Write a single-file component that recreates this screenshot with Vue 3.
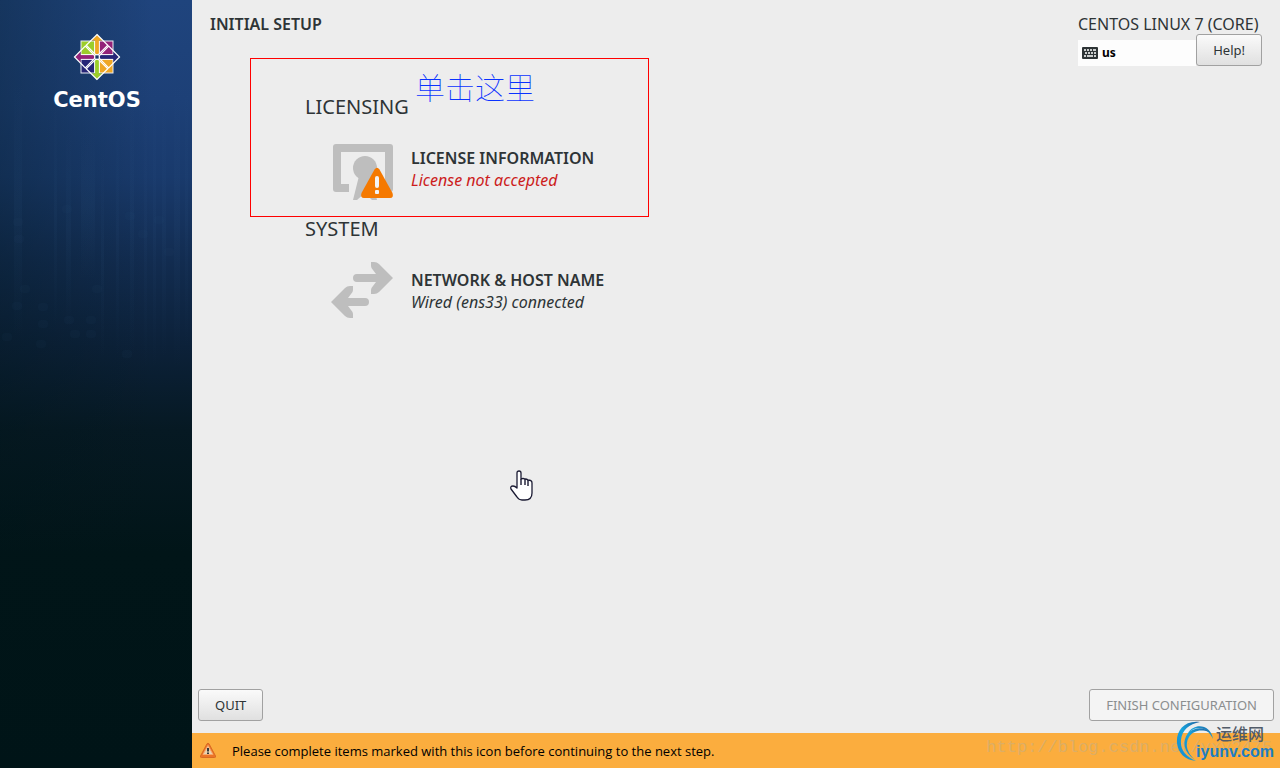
<script setup>
const bands = [
  { x: 14, w: 8, y: 80, h: 260 }, { x: 54, w: 3, y: 100, h: 230 },
  { x: 66, w: 5, y: 130, h: 200 }, { x: 81, w: 14, y: 130, h: 150 },
  { x: 101, w: 3, y: 150, h: 210 }, { x: 116, w: 3, y: 110, h: 250 },
  { x: 130, w: 4, y: 90, h: 270 }, { x: 144, w: 3, y: 100, h: 270 },
  { x: 153, w: 3, y: 90, h: 280 }, { x: 162, w: 4, y: 100, h: 260 },
  { x: 174, w: 6, y: 80, h: 290 }, { x: 185, w: 3, y: 90, h: 260 }
]
const blocks = [
  [13, 218], [14, 235], [20, 285], [38, 303], [38, 320], [62, 205], [92, 285],
  [125, 212], [138, 230], [154, 216], [164, 248], [12, 302], [36, 340],
  [70, 330], [86, 330], [122, 350], [2, 333], [64, 316], [86, 316]
]
const quarters = [0, 90, 180, 270]
const arms = [
  { angle: 0, fill: '#efa724' }, { angle: 90, fill: '#262577' },
  { angle: 180, fill: '#9ccd2a' }, { angle: 270, fill: '#932279' }
]
const tiles = ['#932279', '#efa724', '#262577', '#9ccd2a']
</script>

<template>
  <div class="screen">
    <aside class="sidebar">
      <svg class="texture" viewBox="0 0 192 400" preserveAspectRatio="none" aria-hidden="true">
        <defs>
          <linearGradient id="fade" x1="0" y1="0" x2="0" y2="1">
            <stop offset="0" stop-color="#4574a5" stop-opacity="0" />
            <stop offset="0.5" stop-color="#4574a5" stop-opacity="0.06" />
            <stop offset="1" stop-color="#4574a5" stop-opacity="0" />
          </linearGradient>
        </defs>
        <rect v-for="b in bands" :key="b.x" :x="b.x" :y="b.y" :width="b.w" :height="b.h" fill="url(#fade)" />
        <rect v-for="(b, i) in blocks" :key="'b' + i" :x="b[0]" :y="b[1]" width="10" height="8" rx="3" fill="#3b6080" opacity="0.05" />
      </svg>
      <div class="brand">
        <svg width="48" height="48" viewBox="-24 -24 48 48" role="img" aria-label="CentOS logo">
          <rect v-for="(a, i) in quarters" :key="'t' + a" x="0.5" y="-16" width="15.5" height="15.5" :fill="tiles[i]" stroke="#e9ebf3" stroke-width="1" :transform="`rotate(${a})`" />
          <g v-for="a in arms" :key="a.angle" :transform="`rotate(${a.angle})`">
            <path d="M0-22.5 5.5-16.5H2V-3H-2V-16.5H-5.5Z" :fill="a.fill" />
            <path d="M-2.4-3.5V-16M2.4-3.5V-16" stroke="#fff" stroke-width="1" />
            <path d="M0-22.5 10.8-11.7 0-1-10.8-11.7Z" fill="none" stroke="#fff" stroke-width="1.2" />
          </g>
          <rect x="-2" y="-2" width="4" height="4" fill="#1b3868" stroke="#fff" stroke-width="0.7" />
        </svg>
        <span class="wordmark">CentOS</span>
      </div>
    </aside>

    <main class="main">
      <header class="header">
        <h1>INITIAL SETUP</h1>
        <div class="product">
          <p>CENTOS LINUX 7 (CORE)</p>
          <div class="tools">
            <div class="keyboard">
              <svg width="16" height="12" viewBox="0 0 16 12" aria-hidden="true">
                <rect width="16" height="12" rx="1" fill="#2e3436" />
                <path d="M2 3h2M5 3h2M8 3h2M11 3h3M3 6h2M6 6h2M9 6h2M12 6h2M2 9h2M5 9h6M12 9h2" stroke="#fff" stroke-width="1.7" />
              </svg>
              <span>us</span>
            </div>
            <button type="button" class="btn">Help!</button>
          </div>
        </div>
      </header>

      <div class="hub">
        <section>
          <h2>LICENSING</h2>
          <a href="#license" class="spoke">
            <svg width="64" height="64" viewBox="0 0 64 64" aria-hidden="true">
              <path d="M5 4H59Q62 4 62 7V49Q62 52 59 52H50V44H54V12H10V44H18V52H5Q2 52 2 49V7Q2 4 5 4Z" fill="#bebebe" />
              <circle cx="34" cy="28" r="12" fill="#bebebe" />
              <path d="M28 36H40L46 60H41L34 53 26 60H22Z" fill="#bebebe" />
              <path d="M43.5 29.5Q46 26 48.500 29.500L61.500 53Q63 58 59 58H33Q29 58 30.500 53Z" fill="#f57900" />
              <path d="M46 38v8" stroke="#f3f3f3" stroke-width="4" stroke-linecap="round" />
              <rect x="44" y="50" width="4" height="4" rx="1" fill="#f3f3f3" />
            </svg>
            <span class="info">
              <strong>LICENSE INFORMATION</strong>
              <em class="error">License not accepted</em>
            </span>
          </a>
        </section>
        <section>
          <h2>SYSTEM</h2>
          <a href="#network" class="spoke">
            <svg width="64" height="64" viewBox="0 0 64 64" aria-hidden="true">
              <g fill="#bebebe">
                <path d="M26 12H45L42 8Q40 6 40 4V0H43Q46 0 48 2L62 16 48 30Q46 32 43 32H40V28Q40 26 42 24L45 20H26A4 4 0 0 1 26 12Z" />
                <path d="M34 36H17L20 32Q22 30 22 28V24H19Q16 24 14 26L0 40 14 54Q16 56 19 56H22V52Q22 50 20 48L17 44H34A4 4 0 0 0 34 36Z" />
              </g>
            </svg>
            <span class="info">
              <strong>NETWORK &amp; HOST NAME</strong>
              <em>Wired (ens33) connected</em>
            </span>
          </a>
        </section>
      </div>

      <div class="actions">
        <button type="button" class="btn">QUIT</button>
        <button type="button" class="btn" disabled>FINISH CONFIGURATION</button>
      </div>

      <footer class="status">
        <svg width="18" height="18" viewBox="0 0 18 18" aria-hidden="true">
          <path d="M8 1.800Q9 0.500 10 1.800L16.500 14Q17 15.500 15.500 15.500H2.500Q1 15.500 1.500 14Z" fill="#ec7426" stroke="#d96a24" />
          <path d="M9 3.500 14 12.500H4Z" fill="#e9d3b0" stroke="#f8a66b" />
          <path d="M9 6V9.500M9 10.500V12" stroke="#35383b" stroke-width="2" />
        </svg>
        <span>Please complete items marked with this icon before continuing to the next step.</span>
      </footer>
    </main>

    <div class="callout">单击这里</div>
    <span class="source">http://blog.csdn.net/yxy2475</span>
    <div class="site">
      <svg width="40" height="42" viewBox="0 0 40 42" aria-hidden="true">
        <defs>
          <linearGradient id="swoosh" x1="0" y1="1" x2="1" y2="0">
            <stop offset="0" stop-color="#1784c7" />
            <stop offset="0.5" stop-color="#15a5df" />
            <stop offset="1" stop-color="#245f9c" />
          </linearGradient>
        </defs>
        <path d="M24 1C8-1 0 10 1 22 2 32 9 39 20 40 9 35 4 28 5 19 6 9 13 3 24 1Z" fill="url(#swoosh)" />
        <path d="M12 12C19 1 35 4 37 18 31 5 20 4 12 12Z" fill="url(#swoosh)" />
        <path d="M19 39C7 31 6 20 12 12 19 6 28 6 33 11 24 8 17 10 13 16 8 24 12 33 19 39Z" fill="url(#swoosh)" />
      </svg>
      <div class="names">
        <span class="cn">运维网</span>
        <span class="domain">iyunv.com</span>
      </div>
    </div>
    <svg class="pointer" width="24" height="32" viewBox="0 0 24 32" aria-hidden="true">
      <path d="M7 18V3Q7 1 9 1T11 3V9Q13 8 15 9 17 9 18 10 22 10 22 13V23Q22 30 15 30H12Q9 30 7 27L1 19Q0 16 3 16 5 16 7 18Z" fill="#fff" stroke="#1b1b33" stroke-width="1.300" stroke-linejoin="round" />
      <path d="M11 9V15M15 9V15M18 10V16" stroke="#1b1b33" stroke-width="1.400" />
    </svg>
  </div>
</template>

<style>
body {
  margin: 0;
}
</style>

<style scoped>
.screen {
  position: relative;
  display: flex;
  min-height: 100vh;
  overflow: hidden;
  background: #ededed;
  color: #2e3436;
  font-family: "Noto Sans", "Noto Sans CJK SC", sans-serif;
  font-size: 16px;
}
.sidebar {
  position: relative;
  width: 15%;
  flex: none;
  background:
    linear-gradient(to right, rgba(0, 20, 24, 0.3), rgba(0, 20, 24, 0) 80%),
    linear-gradient(to bottom, #1f447d 0, #1d4077 13%, #193a6c 23%, #122c50 34%, #0c2139 45%, #061923 56%, #011518 72%, #001417 100%);
}
.texture {
  position: absolute;
  inset: 0;
  width: 100%;
  height: 400px;
}
.brand {
  position: relative;
  display: flex;
  flex-direction: column;
  align-items: center;
  gap: 5px;
  padding: 33px 0 0 2px;
}
.wordmark {
  color: #fff;
  font: 700 21px/28px "DejaVu Sans", sans-serif;
}
.main {
  display: flex;
  flex: 1;
  flex-direction: column;
  min-width: 0;
}
h1, h2, p {
  margin: 0;
}
.header {
  display: flex;
  justify-content: space-between;
  padding: 14px 18px 0;
}
h1 {
  font-size: 16px;
  font-weight: 600;
  line-height: 20px;
}
.product {
  min-width: 184px;
  font-size: 16px;
  line-height: 20px;
}
.tools {
  display: flex;
  align-items: flex-end;
}
.keyboard {
  display: flex;
  flex: 1;
  align-items: center;
  gap: 4px;
  height: 26px;
  padding-left: 4px;
  background: #fdfdfd;
  color: #000;
  font-size: 12px;
  font-weight: 700;
}
.btn {
  box-sizing: border-box;
  height: 32px;
  padding: 0 16px;
  border: 1px solid #a1a1a1;
  border-radius: 3px;
  background: linear-gradient(#fafafa, #e0e0e0);
  color: #2e3436;
  font: inherit;
  font-size: 13px;
}
.btn:disabled {
  background: #f4f4f4;
  color: #8b8e8f;
}
.hub {
  display: flex;
  flex: 1;
  flex-direction: column;
  gap: 12px;
  padding: 28px 18px 24px 113px;
}
h2 {
  margin-bottom: 20px;
  font-size: 20px;
  font-weight: 400;
  line-height: 26px;
}
.spoke {
  display: flex;
  gap: 16px;
  margin-left: 26px;
  color: inherit;
  text-decoration: none;
}
.info {
  display: flex;
  flex-direction: column;
  padding-top: 7px;
  font-size: 16px;
  line-height: 22px;
}
.info strong {
  font-weight: 600;
}
.error {
  color: #cc1c1c;
}
.actions {
  display: flex;
  justify-content: space-between;
  padding: 0 6px 12px;
}
.status {
  display: flex;
  align-items: center;
  gap: 15px;
  height: 35px;
  padding-left: 7px;
  background: #fbad3e;
  color: #000;
  font-family: "Open Sans", sans-serif;
  font-size: 13px;
}
.callout {
  position: absolute;
  top: 58px;
  left: 250px;
  box-sizing: border-box;
  width: 399px;
  height: 159px;
  padding: 7px 0 0 164px;
  border: 1px solid #f00;
  color: #0a32ff;
  font: 100 30px/40px "Noto Sans CJK SC", sans-serif;
  pointer-events: none;
}
.source {
  position: absolute;
  right: 8px;
  bottom: 8px;
  color: #dcae66;
  font: 17px/24px "Liberation Mono", monospace;
}
.site {
  position: absolute;
  right: 6px;
  bottom: 5px;
  display: flex;
}
.names {
  display: flex;
  flex-direction: column;
  align-items: flex-end;
  margin-left: -20px;
  padding-top: 2px;
}
.cn {
  margin-right: 10px;
  color: #515b68;
  font: 500 16px/20px "Noto Sans CJK SC", sans-serif;
}
.domain {
  color: #1d7ec2;
  font: 700 16px/18px "Liberation Sans", sans-serif;
}
.pointer {
  position: absolute;
  top: 470px;
  left: 510px;
}
</style>
